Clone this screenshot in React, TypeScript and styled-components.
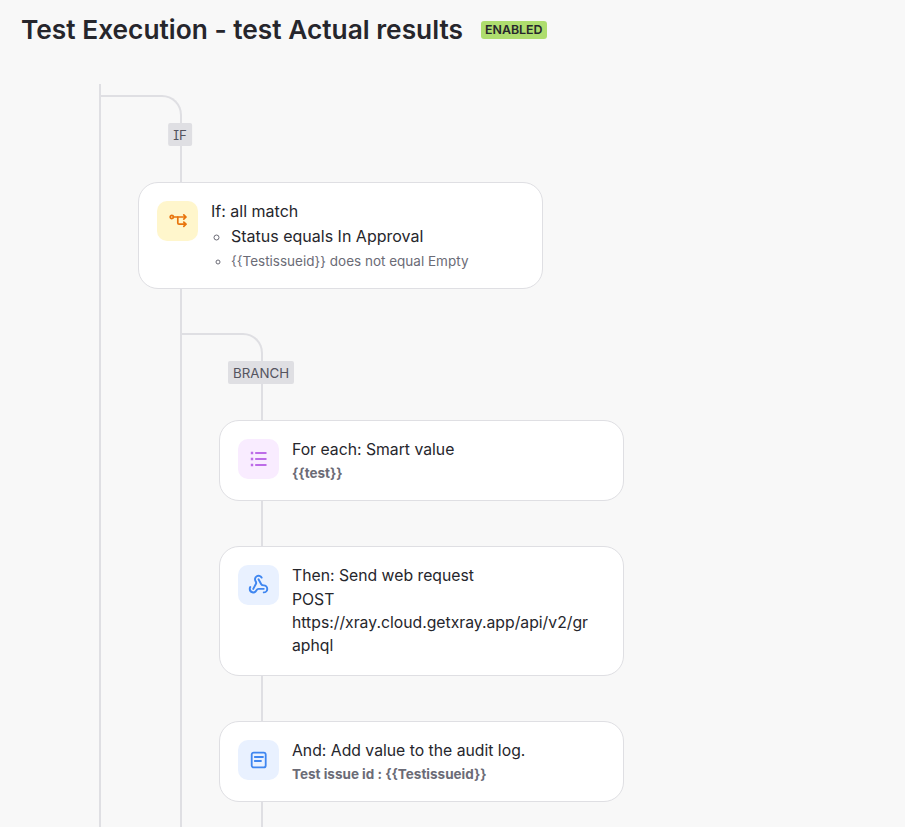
import styled, { createGlobalStyle } from "styled-components";
import { Webhook } from "lucide-react";

const GlobalStyle = createGlobalStyle`
  html, body {
    margin: 0;
    height: 100%;
    overflow: hidden;
    background: #f8f8f8;
  }
  body {
    font-family: Inter, "Noto Sans", sans-serif;
    color: #26262c;
  }
`;

const Page = styled.div`
  padding: 12px 0 0 21px;
  height: 815px;
  overflow: hidden;
`;

const Header = styled.div`
  display: flex;
  align-items: center;
  gap: 18px;
  height: 36px;
`;

const Title = styled.h1`
  margin: 0;
  font-size: 26.3px;
  line-height: 36px;
  font-weight: 600;
  color: #26262c;
`;

const Badge = styled.span`
  background: #aedd6e;
  color: #26262c;
  font-size: 12.4px;
  line-height: 18px;
  font-weight: 600;
  padding: 0 4px;
  border-radius: 3px;
`;

const Flow = styled.div`
  margin-top: 36px;
`;

const Rail = styled.div<{ $indent: number }>`
  margin-left: ${(p) => p.$indent}px;
  border-left: 2px solid #dfdfe3;
`;

const Connector = styled.div`
  width: 81px;
  height: 28px;
  margin-top: -1px;
  box-sizing: border-box;
  border-top: 2px solid #dfdfe3;
  border-right: 2px solid #dfdfe3;
  border-top-right-radius: 20px;
`;

const Tag = styled.div`
  display: table;
  transform: translateX(-50%);
  margin-left: -2px;
  margin-bottom: 36px;
  background: #dfdfe3;
  color: #54545e;
  font-size: 13.3px;
  line-height: 22.4px;
  font-feature-settings: "ss02";
  padding: 0.6px 5px 0;
  border-radius: 2px;
`;

const Card = styled.div`
  display: flex;
  gap: 13px;
  width: 405px;
  box-sizing: border-box;
  margin-left: -44px;
  margin-bottom: 45px;
  padding: 17px 18px 17.1px;
  background: #fff;
  border: 1px solid #dfdfe3;
  border-radius: 20px;
`;

const IconBox = styled.div<{ $bg: string; $fg: string }>`
  flex: none;
  display: flex;
  align-items: center;
  justify-content: center;
  width: 41px;
  height: 40px;
  margin-top: 1px;
  border-radius: 10px;
  background: ${(p) => p.$bg};
  color: ${(p) => p.$fg};
`;

const Body = styled.div`
  width: 300px;
  padding-top: 0.4px;
  font-size: 15.75px;
  line-height: 23.3px;
  overflow-wrap: anywhere;
`;

const Line = styled.div``;

const IfLine = styled.div`
  font-size: 16px;
`;

const Sub = styled.div`
  margin: 1.6px 0 -1.6px;
  font-size: 13.5px;
  line-height: 21.2px;
  font-weight: 700;
  color: #6b6b76;
`;

const Conditions = styled.ul`
  margin: 0 0 -2.8px;
  padding: 0 0 0 20px;
  list-style: circle;
`;

const Condition = styled.li<{ $muted?: boolean }>`
  font-size: ${(p) => (p.$muted ? 13.5 : 16)}px;
  line-height: 25px;
  color: ${(p) => (p.$muted ? "#6b6b76" : "#26262c")};
  &::marker {
    color: #6b6b76;
  }
`;

const RailEnd = styled.div`
  height: 40px;
`;

const RailStart = styled.div`
  height: 12px;
`;

const IfIcon = () => (
  <svg width="18" height="18" viewBox="0 0 18 18" fill="none" stroke="currentColor" strokeWidth="1.7" strokeLinecap="round" strokeLinejoin="round">
    <circle cx="2.8" cy="5" r="1.6" />
    <path d="M4.5 5H17M14.8 2.9L17 5L14.8 7.1" />
    <path d="M8.8 5V11C8.8 11.7 9.2 12.2 10 12.2H17M14.8 10.1L17 12.2L14.8 14.3" />
  </svg>
);

const ListIcon = () => (
  <svg width="18" height="18" viewBox="0 0 18 18" fill="none" stroke="currentColor" strokeWidth="2">
    <path d="M5.2 3H16.5M5.2 9H16.5M5.2 15H16.5" />
    <path d="M0.8 3H3.2M0.8 9H3.2M0.8 15H3.2" strokeWidth="2.4" />
  </svg>
);

const NoteIcon = () => (
  <svg width="18" height="18" viewBox="0 0 18 18" fill="none" stroke="currentColor" strokeWidth="1.8" strokeLinecap="round" strokeLinejoin="round">
    <rect x="1.7" y="1.6" width="14" height="14.8" rx="2" />
    <path d="M4.8 6H13M4.8 10H11" />
  </svg>
);

export default function App() {
  return (
    <>
      <GlobalStyle />
      <Page>
        <Header>
          <Title>Test Execution - test Actual results</Title>
          <Badge>ENABLED</Badge>
        </Header>
        <Flow>
          <Rail $indent={78}>
            <RailStart />
            <Connector />
            <Rail $indent={79}>
              <Tag>IF</Tag>
              <Card>
                <IconBox $bg="#fff6cc" $fg="#e8740c">
                  <IfIcon />
                </IconBox>
                <Body>
                  <IfLine>If: all match</IfLine>
                  <Conditions>
                    <Condition>Status equals In Approval</Condition>
                    <Condition $muted>{"{{Testissueid}} does not equal Empty"}</Condition>
                  </Conditions>
                </Body>
              </Card>
              <Connector />
              <Rail $indent={79}>
                <Tag>BRANCH</Tag>
                <Card>
                  <IconBox $bg="#f9ecff" $fg="#bd6ce8">
                    <ListIcon />
                  </IconBox>
                  <Body>
                    <Line>For each: Smart value</Line>
                    <Sub>{"{{test}}"}</Sub>
                  </Body>
                </Card>
                <Card>
                  <IconBox $bg="#e9f1ff" $fg="#3f86f0">
                    <Webhook size={21} strokeWidth={2.2} />
                  </IconBox>
                  <Body>
                    <Line>Then: Send web request</Line>
                    <Line>POST</Line>
                    <Line>https://xray.cloud.getxray.app/api/v2/graphql</Line>
                  </Body>
                </Card>
                <Card>
                  <IconBox $bg="#e9f1ff" $fg="#3f86f0">
                    <NoteIcon />
                  </IconBox>
                  <Body>
                    <Line>And: Add value to the audit log.</Line>
                    <Sub>{"Test issue id : {{Testissueid}}"}</Sub>
                  </Body>
                </Card>
                <RailEnd />
              </Rail>
            </Rail>
          </Rail>
        </Flow>
      </Page>
    </>
  );
}
